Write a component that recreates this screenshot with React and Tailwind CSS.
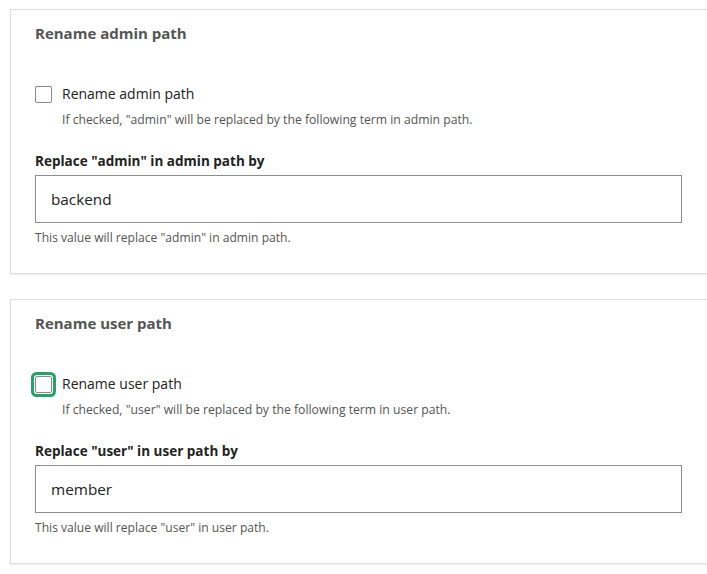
import React from 'react'

// Two settings cards, each: heading, a checkbox with its description, then a text field with help text.
const SECTIONS = [
  {
    title: 'Rename admin path',
    term: 'admin',
    value: 'backend',
    focused: false,
  },
  {
    title: 'Rename user path',
    term: 'user',
    value: 'member',
    focused: true,
  },
]

function Card({ title, term, value, focused }) {
  return (
    <section className="border-y border-l border-[#dedede] bg-white pl-[24px] pr-[25px] pt-[11px] pb-[26px] shadow-[0_1px_2px_rgba(0,0,0,0.08)]">
      <h2 className="text-[15px] leading-[24px] font-bold text-[#555]">{title}</h2>

      <label className="mt-[39px] flex items-center gap-[10px]">
        <span
          className={
            'block h-[17px] w-[17px] rounded-[2px] border border-[#8a8a8a] bg-white ' +
            (focused ? 'shadow-[0_0_0_1px_#fff,0_0_0_4px_#26a269]' : '')
          }
        />
        <span className="text-[14px] leading-[20px] text-[#222]">{title}</span>
      </label>
      <p className="mt-[7px] pl-[27px] text-[12.2px] leading-[18px] text-[#555]">
        If checked, "{term}" will be replaced by the following term in {term} path.
      </p>

      <div className="mt-[22px] text-[13.5px] leading-[20px] font-bold text-[#222]">
        Replace "{term}" in {term} path by
      </div>
      <input
        readOnly
        value={value}
        className="mt-[4px] block h-[48px] w-full border border-[#8e8e8e] bg-white px-[15px] text-[15.3px] text-[#222] outline-none"
      />
      <p className="mt-[6px] text-[12.1px] leading-[18px] text-[#555]">
        This value will replace "{term}" in {term} path.
      </p>
    </section>
  )
}

export default function App() {
  return (
    <div className="min-h-[574px] bg-white pl-[10px] pt-[9px] font-['Open_Sans','Noto_Sans',sans-serif]">
      <div className="flex flex-col gap-[25px]">
        {SECTIONS.map((s) => (
          <Card key={s.term} {...s} />
        ))}
      </div>
    </div>
  )
}
